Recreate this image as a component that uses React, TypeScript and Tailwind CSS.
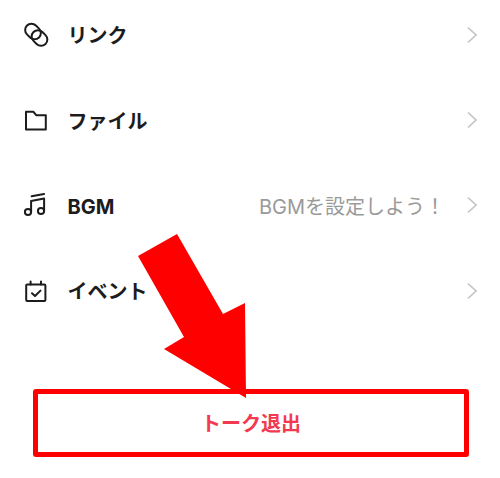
const font = { fontFamily: '"Inter", "Noto Sans CJK JP", sans-serif' };

function Chevron() {
  return (
    <svg width="12" height="20" viewBox="0 0 12 20" fill="none" stroke="#c4c4c4" strokeWidth="1.7" className="shrink-0">
      <path d="M2 2.5 L10 10 L2 17.5" />
    </svg>
  );
}

const iconProps = {
  width: 26,
  height: 26,
  viewBox: "0 0 26 26",
  fill: "none",
  stroke: "#1c1c1e",
  strokeWidth: 2,
  strokeLinejoin: "round" as const,
  strokeLinecap: "round" as const,
};

function LinkIcon() {
  return (
    <svg {...iconProps}>
      <rect x="1.5" y="3.2" width="17" height="12.6" rx="6.3" transform="rotate(45 10 9.5)" />
      <rect x="8" y="9.7" width="17" height="12.6" rx="6.3" transform="rotate(45 16.5 16)" />
    </svg>
  );
}

function FolderIcon() {
  return (
    <svg {...iconProps}>
      <path d="M3 4.8 H10.5 L13.2 8.2 H22.8 V22.4 H3 Z" />
    </svg>
  );
}

function MusicIcon() {
  return (
    <svg {...iconProps}>
      <circle cx="5" cy="20" r="3.1" />
      <circle cx="18" cy="19" r="3.1" />
      <path d="M8.1 20 V9 L21.1 6.6 V19" />
      <path d="M8.6 4.2 L21.1 2" />
    </svg>
  );
}

function CalendarIcon() {
  return (
    <svg {...iconProps}>
      <rect x="3.2" y="6.5" width="19.2" height="16.5" rx="1" />
      <path d="M7.6 3.5 V6.5 M18 3.5 V6.5" />
      <path d="M9 15.2 L12 18 L17.5 12.6" />
    </svg>
  );
}

function Row({ icon, label, hint }: { icon: React.ReactNode; label: string; hint?: string }) {
  return (
    <div className="flex h-[85.4px] items-center pl-[23px] pr-[22px]">
      <div className="flex w-[44.5px] shrink-0 items-center">{icon}</div>
      <span className="pt-[3px] text-[20px] font-bold text-[#1c1c1e]">{label}</span>
      <span className="ml-auto mr-[21px] pt-[3px] text-[20px] text-[#9a9a9a]">{hint}</span>
      <Chevron />
    </div>
  );
}

export default function App() {
  return (
    <div className="relative h-[478px] w-[500px] overflow-hidden bg-white" style={font}>
      <div className="-mt-[8px]">
        <Row icon={<LinkIcon />} label="リンク" />
        <Row icon={<FolderIcon />} label="ファイル" />
        <Row icon={<MusicIcon />} label="BGM" hint="BGMを設定しよう！" />
        <Row icon={<CalendarIcon />} label="イベント" />
      </div>
      <div className="ml-[33px] mt-[55px] flex h-[68px] w-[436px] items-center justify-center rounded-[3px] border-[5px] border-[#ff0000]">
        <span className="pt-[2px] text-[20px] font-bold text-[#f2394f]">トーク退出</span>
      </div>
      <svg className="absolute left-0 top-0" width="500" height="478" viewBox="0 0 500 478">
        <polygon points="177,234 138,256 184,337 164,349 246,398 245,303 223,314" fill="#ff0000" />
      </svg>
    </div>
  );
}
